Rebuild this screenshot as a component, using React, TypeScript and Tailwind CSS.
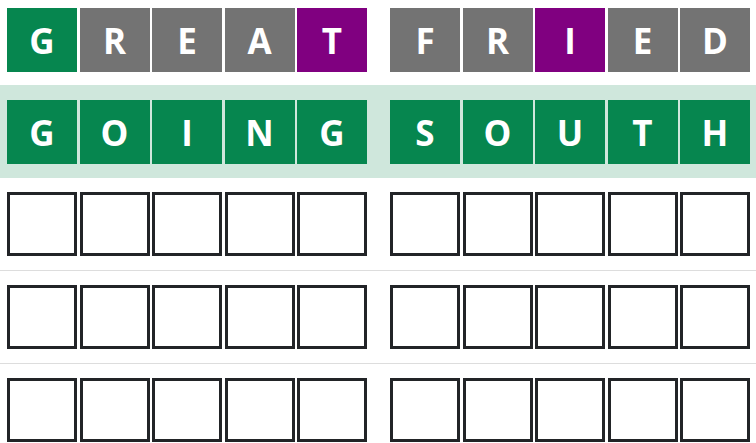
import React from 'react';

type Tile = { letter: string; state: 'correct' | 'absent' | 'present' | 'empty' };

const fontStack = { fontFamily: '"Open Sans", "Noto Sans", Arial, sans-serif' };

function toTiles(word: string, states: string): Tile[] {
  return word.split('').map((l, i) => ({
    letter: l,
    state: states[i] === 'g' ? 'correct' : states[i] === 'p' ? 'present' : 'absent',
  }));
}

const emptyRow: Tile[] = Array.from({ length: 5 }, () => ({ letter: '', state: 'empty' }));

const rows: { left: Tile[]; right: Tile[]; active?: boolean }[] = [
  { left: toTiles('GREAT', 'gxxxp'), right: toTiles('FRIED', 'xxpxx') },
  { left: toTiles('GOING', 'ggggg'), right: toTiles('SOUTH', 'ggggg'), active: true },
  { left: emptyRow, right: emptyRow },
  { left: emptyRow, right: emptyRow },
  { left: emptyRow, right: emptyRow },
];

function TileBox({ tile }: { tile: Tile }) {
  const color =
    tile.state === 'correct'
      ? 'bg-[#06864f]'
      : tile.state === 'present'
      ? 'bg-[#800080]'
      : tile.state === 'absent'
      ? 'bg-[#737373]'
      : 'bg-white border-[3px] border-[#222427]';
  return (
    <div
      className={`h-16 flex items-center justify-center text-white font-bold text-[35px] leading-none ${color}`}
    >
      {tile.letter}
    </div>
  );
}

function Board({ tiles }: { tiles: Tile[] }) {
  return (
    <div className="grid grid-cols-5 gap-x-[2.5px] w-[360px]">
      {tiles.map((t, i) => (
        <TileBox key={i} tile={t} />
      ))}
    </div>
  );
}

export default function App() {
  return (
    <div className="w-[756px] h-[443px] overflow-hidden bg-white" style={fontStack}>
      {rows.map((row, i) => {
        let rowClass = 'py-[14px] border-b border-[#dddddd]';
        if (i === 0) rowClass = 'pt-[8px] pb-[13px]';
        if (row.active) rowClass = 'pt-[15px] pb-[14px] bg-[#cfe7dc]';
        return (
          <div key={i} className={`flex gap-[23px] pl-[7px] ${rowClass}`}>
            <Board tiles={row.left} />
            <Board tiles={row.right} />
          </div>
        );
      })}
    </div>
  );
}
